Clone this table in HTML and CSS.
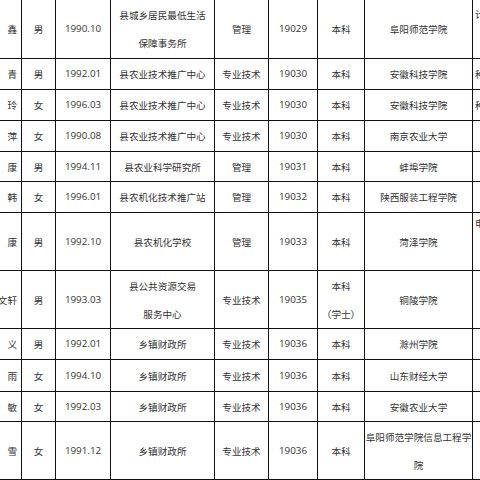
FILE: index.html
```html
<!DOCTYPE html>
<html lang="zh-CN">
<head>
<meta charset="utf-8">
<title>招聘人员名单</title>
<link rel="stylesheet" href="styles.css">
</head>
<body>
<div class="sheet">
  <div class="c name">鑫</div><div class="c">男</div><div class="c num">1990.10</div><div class="c">县城乡居民最低生活<br>保障事务所</div><div class="c">管理</div><div class="c num">19029</div><div class="c">本科</div><div class="c">阜阳师范学院</div><div class="c edge top">计算机科学</div>
  <div class="c name">青</div><div class="c">男</div><div class="c num">1992.01</div><div class="c">县农业技术推广中心</div><div class="c">专业技术</div><div class="c num">19030</div><div class="c">本科</div><div class="c">安徽科技学院</div><div class="c edge">种植</div>
  <div class="c name">玲</div><div class="c">女</div><div class="c num">1996.03</div><div class="c">县农业技术推广中心</div><div class="c">专业技术</div><div class="c num">19030</div><div class="c">本科</div><div class="c">安徽科技学院</div><div class="c edge">种植</div>
  <div class="c name">萍</div><div class="c">女</div><div class="c num">1990.08</div><div class="c">县农业技术推广中心</div><div class="c">专业技术</div><div class="c num">19030</div><div class="c">本科</div><div class="c">南京农业大学</div><div class="c edge"></div>
  <div class="c name">康</div><div class="c">男</div><div class="c num">1994.11</div><div class="c">县农业科学研究所</div><div class="c">管理</div><div class="c num">19031</div><div class="c">本科</div><div class="c">蚌埠学院</div><div class="c edge"></div>
  <div class="c name">韩</div><div class="c">女</div><div class="c num">1996.01</div><div class="c">县农机化技术推广站</div><div class="c">管理</div><div class="c num">19032</div><div class="c">本科</div><div class="c">陕西服装工程学院</div><div class="c edge"></div>
  <div class="c name">康</div><div class="c">男</div><div class="c num">1992.10</div><div class="c">县农机化学校</div><div class="c">管理</div><div class="c num">19033</div><div class="c">本科</div><div class="c">菏泽学院</div><div class="c edge top tight">电子</div>
  <div class="c name">文轩</div><div class="c">男</div><div class="c num">1993.03</div><div class="c">县公共资源交易<br>服务中心</div><div class="c">专业技术</div><div class="c num">19035</div><div class="c">本科<br>（学士）</div><div class="c">铜陵学院</div><div class="c edge"></div>
  <div class="c name">义</div><div class="c">男</div><div class="c num">1992.01</div><div class="c">乡镇财政所</div><div class="c">专业技术</div><div class="c num">19036</div><div class="c">本科</div><div class="c">滁州学院</div><div class="c edge"></div>
  <div class="c name">雨</div><div class="c">女</div><div class="c num">1994.10</div><div class="c">乡镇财政所</div><div class="c">专业技术</div><div class="c num">19036</div><div class="c">本科</div><div class="c">山东财经大学</div><div class="c edge"></div>
  <div class="c name">敏</div><div class="c">女</div><div class="c num">1992.03</div><div class="c">乡镇财政所</div><div class="c">专业技术</div><div class="c num">19036</div><div class="c">本科</div><div class="c">安徽农业大学</div><div class="c edge"></div>
  <div class="c name">雪</div><div class="c">女</div><div class="c num">1991.12</div><div class="c">乡镇财政所</div><div class="c">专业技术</div><div class="c num">19036</div><div class="c">本科</div><div class="c">阜阳师范学院信息工程学<br>院</div><div class="c edge"></div>
</div>
</body>
</html>
```
FILE: styles.css
```css
html, body {
  margin: 0;
  padding: 0;
  background: #ffffff;
  overflow: hidden;
  width: 480px;
  height: 480px;
}

.sheet {
  display: grid;
  width: max-content;
  grid-template-columns: 21px 33px 54px 103px 53px 48px 46px 107px 80px;
  grid-template-rows: 58px 30px 30px 30px 29px 30px 57px 57px 30px 31px 29px 57px;
  gap: 1px;
  padding-bottom: 1px;
  background: #111111;
  font-family: "Noto Sans CJK SC", "Noto Sans", sans-serif;
  font-size: 9.6px;
  color: #333333;
}

.c {
  background: #ffffff;
  display: flex;
  align-items: center;
  justify-content: center;
  text-align: center;
  line-height: 28px;
  white-space: nowrap;
  overflow: hidden;
}

.num {
  font-family: "Open Sans", "Noto Sans", sans-serif;
  font-size: 9.8px;
}

.name {
  justify-content: flex-end;
  padding-right: 4px;
}

.edge {
  justify-content: flex-start;
  padding-left: 2px;
}

.top {
  align-items: flex-start;
}

.tight {
  line-height: 20px;
}
```
